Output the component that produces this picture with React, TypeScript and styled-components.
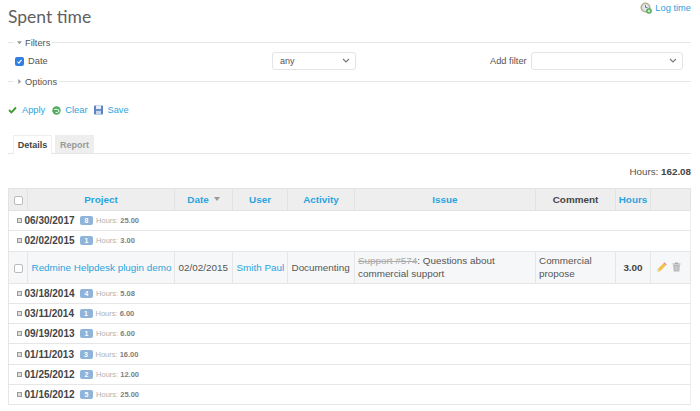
import React from "react";
import styled, { createGlobalStyle } from "styled-components";

const Global = createGlobalStyle`
  html, body { margin: 0; padding: 0; background: #fff; overflow: hidden; }
  body { font-family: "Liberation Sans", Arial, sans-serif; font-size: 9.3px; color: #555; }
  a { color: #2aa4de; text-decoration: none; }
`;

const Page = styled.div`
  position: relative;
  width: 683px;
  height: 411px;
  padding: 0 9px 0 8px;
  overflow: hidden;
`;
const TitleRow = styled.div`
  display: flex;
  justify-content: space-between;
  align-items: flex-start;
  height: 37px;
`;
const Title = styled.h2`
  margin: 6px 0 0;
  font-family: Lato, "Liberation Sans", sans-serif;
  font-weight: 400;
  font-size: 17.5px;
  line-height: 22px;
  color: #5f5f5f;
`;
const IconLink = styled.a`
  display: inline-flex;
  align-items: center;
  gap: 3px;
`;
const LogLink = styled(IconLink)`
  margin-top: 2px;
`;
const Group = styled.div`
  display: flex;
  align-items: center;
  height: 11px;
`;
const GroupLine = styled.span`
  flex: 1;
  height: 1px;
  background: #e6e6e6;
`;
const GroupStub = styled.span`
  width: 6px;
  height: 1px;
  background: #e6e6e6;
`;
const GroupLabel = styled.span`
  display: inline-flex;
  align-items: center;
  gap: 3px;
  padding: 0 2px 0 3px;
`;
const FilterRow = styled.div`
  display: flex;
  align-items: center;
  padding: 4px 0 6px 7px;
`;
const Check = styled.input.attrs({ type: "checkbox" })<{ $m?: string }>`
  appearance: none;
  box-sizing: border-box;
  width: 9px;
  height: 9px;
  margin: ${(p) => p.$m ?? "0"};
  background: #fff;
  border: 1px solid #bbb;
  border-radius: 2px;
  display: block;
`;
const BlueCheck = styled.span`
  display: inline-flex;
  align-items: center;
  justify-content: center;
  width: 9px;
  height: 9px;
  border-radius: 2px;
  background: #2f7fe0;
`;
const DateLabel = styled.span`
  margin-left: 4px;
  width: 244px;
`;
const SelectBox = styled.div<{ $w: number }>`
  position: relative;
  box-sizing: border-box;
  width: ${(p) => p.$w}px;
  height: 18px;
  border: 1px solid #e4e4e4;
  border-radius: 3px;
  background: #fff;
  line-height: 16px;
  padding-left: 7px;
  font-size: 9px;
`;
const Chevron = styled.svg`
  position: absolute;
  right: 5px;
  top: 5px;
`;
const AddFilter = styled.span`
  width: 36.5px;
  margin-left: 134px;
  margin-right: 4.5px;
  white-space: nowrap;
`;
const Actions = styled.div`
  display: flex;
  align-items: center;
  height: 14px;
  margin-top: 16px;
`;
const ApplyLink = styled(IconLink)<{ $gap: number; $after: number }>`
  gap: ${(p) => p.$gap}px;
  margin-right: ${(p) => p.$after}px;
`;
const Tabs = styled.div`
  display: flex;
  align-items: flex-end;
  gap: 3px;
  height: 18px;
  margin-top: 18px;
  padding-left: 5px;
  border-bottom: 1px solid #e6e6e6;
`;
const Tab = styled.div<{ $active?: boolean }>`
  box-sizing: border-box;
  width: 39px;
  height: ${(p) => (p.$active ? 19 : 18)}px;
  line-height: 18px;
  text-align: center;
  margin-bottom: ${(p) => (p.$active ? "-1px" : "0")};
  background: ${(p) => (p.$active ? "#fff" : "#eee")};
  border: 1px solid #eee;
  border-bottom: 0;
  font-weight: 700;
  font-size: 9px;
  color: ${(p) => (p.$active ? "#444" : "#999")};
`;
const Total = styled.div`
  text-align: right;
  height: 34px;
  line-height: 36px;
  font-size: 9.8px;
  b { color: #444; }
`;
const Table = styled.table`
  width: 682px;
  table-layout: fixed;
  border-collapse: collapse;
  font-size: 9.9px;
`;
const Th = styled.th<{ $plain?: boolean }>`
  height: 21px;
  padding: 0;
  background: #eee;
  border: 1px solid #e2e2e2;
  font-weight: 700;
  text-align: center;
  color: ${(p) => (p.$plain ? "#444" : "#2aa4de")};
`;
const SortArrow = styled.span`
  display: inline-block;
  width: 0;
  height: 0;
  margin-left: 5px;
  vertical-align: 2px;
  border-left: 3.5px solid transparent;
  border-right: 3.5px solid transparent;
  border-top: 4px solid #999;
`;
const GroupCell = styled.td`
  height: 19.3px;
  padding: 0 0 0 8px;
  border: 1px solid #e6e6e6;
  border-right-color: #eee;
  white-space: nowrap;
  background: #fff;
`;
const GroupInner = styled.div`
  display: flex;
  align-items: center;
`;
const Toggle = styled.span`
  box-sizing: border-box;
  width: 5px;
  height: 5px;
  margin-right: 2.5px;
  border: 1px solid #999;
  background: #ddd;
`;
const GroupDate = styled.strong`
  font-size: 10px;
  color: #444;
`;
const Count = styled.span`
  box-sizing: border-box;
  width: 13px;
  height: 9px;
  margin: 0 3px 0 5.5px;
  background: #8fb3d9;
  border-radius: 2px;
  color: #fff;
  font-size: 7px;
  font-weight: 700;
  line-height: 9px;
  text-align: center;
`;
const HoursLabel = styled.span`
  font-size: 7.5px;
  color: #b0b0b0;
  b { color: #808080; }
`;
const Td = styled.td`
  height: 31px;
  padding: 0 3px;
  background: #f6f7f8;
  border: 1px solid #e6e6e6;
  line-height: 13px;
  text-align: left;
`;
const NoWrapTd = styled(Td)`
  padding-left: 3.5px;
  white-space: nowrap;
`;
const HoursTd = styled(Td)`
  font-weight: 700;
  color: #444;
  text-align: center;
`;
const Struck = styled.span`
  color: #aaa;
  text-decoration: line-through;
`;
const RowActions = styled.div`
  display: flex;
  align-items: center;
  gap: 5px;
  padding-left: 2px;
`;

const ArrowIcon = ({ open }: { open: boolean }) => (
  <svg width="5" height="5" viewBox="0 0 6 6">
    <path d={open ? "M0 1.5h6L3 5z" : "M1.5 0v6L5 3z"} fill="#999" />
  </svg>
);
const SelectChevron = () => (
  <Chevron width="8" height="6" viewBox="0 0 8 6">
    <path d="M1 1l3 3 3-3" fill="none" stroke="#777" strokeWidth="1.1" />
  </Chevron>
);

const groups1 = [
  ["06/30/2017", "8", "25.00"],
  ["02/02/2015", "1", "3.00"],
];
const groups2 = [
  ["03/18/2014", "4", "5.08"],
  ["03/11/2014", "1", "6.00"],
  ["09/19/2013", "1", "6.00"],
  ["01/11/2013", "3", "16.00"],
  ["01/25/2012", "2", "12.00"],
  ["01/16/2012", "5", "25.00"],
];
const cols = [19, 147, 58, 55, 67, 181, 80, 35, 40];

const GroupRow = ({ g }: { g: string[] }) => (
  <tr>
    <GroupCell colSpan={9}>
      <GroupInner>
        <Toggle />
        <GroupDate>{g[0]}</GroupDate>
        <Count>{g[1]}</Count>
        <HoursLabel>
          Hours: <b>{g[2]}</b>
        </HoursLabel>
      </GroupInner>
    </GroupCell>
  </tr>
);

export default function App() {
  return (
    <Page>
      <Global />
      <TitleRow>
        <Title>Spent time</Title>
        <LogLink href="#">
          <svg width="12" height="12" viewBox="0 0 12 12">
            <circle cx="5.5" cy="5.5" r="5" fill="#b9ad8f" />
            <circle cx="5.5" cy="5.5" r="3.4" fill="#dfe7ef" />
            <path d="M5.5 3v2.5h2" stroke="#667" strokeWidth="0.8" fill="none" />
            <circle cx="9" cy="9" r="2.8" fill="#45a84a" />
            <path d="M7.5 9h3M9 7.5v3" stroke="#fff" strokeWidth="0.9" />
          </svg>
          Log time
        </LogLink>
      </TitleRow>
      <Group>
        <GroupStub />
        <GroupLabel>
          <ArrowIcon open />
          Filters
        </GroupLabel>
        <GroupLine />
      </Group>
      <FilterRow>
        <BlueCheck>
          <svg width="7" height="7" viewBox="0 0 7 7">
            <path d="M1.5 3.7l1.4 1.4 2.6-3.2" fill="none" stroke="#fff" strokeWidth="1.1" />
          </svg>
        </BlueCheck>
        <DateLabel>Date</DateLabel>
        <SelectBox $w={84}>
          any
          <SelectChevron />
        </SelectBox>
        <AddFilter>Add filter</AddFilter>
        <SelectBox $w={152}>
          <SelectChevron />
        </SelectBox>
      </FilterRow>
      <Group>
        <GroupStub />
        <GroupLabel>
          <ArrowIcon open={false} />
          Options
        </GroupLabel>
        <GroupLine />
      </Group>
      <Actions>
        <ApplyLink href="#" $gap={5} $after={7}>
          <svg width="9" height="8" viewBox="0 0 9 8">
            <path d="M1 4l2.4 2.4L8 1.5" fill="none" stroke="#3f9c35" strokeWidth="1.9" />
          </svg>
          Apply
        </ApplyLink>
        <ApplyLink href="#" $gap={4} $after={7}>
          <svg width="9" height="9" viewBox="0 0 9 9">
            <circle cx="4.5" cy="4.5" r="4.2" fill="#4fae5a" />
            <path d="M2.2 3.4h3.2a1.5 1.5 0 010 3H3.6" fill="none" stroke="#fff" strokeWidth="1" />
          </svg>
          Clear
        </ApplyLink>
        <ApplyLink href="#" $gap={4} $after={0}>
          <svg width="9" height="10" viewBox="0 0 9 10">
            <rect x="0" y="0.5" width="9" height="9" rx="0.8" fill="#5b84c4" />
            <rect x="2" y="0.5" width="5" height="3.6" fill="#e7eef8" />
            <rect x="2" y="5.8" width="5" height="3.7" fill="#c8d6ea" />
          </svg>
          Save
        </ApplyLink>
      </Actions>
      <Tabs>
        <Tab $active>Details</Tab>
        <Tab>Report</Tab>
      </Tabs>
      <Total>
        Hours: <b>162.08</b>
      </Total>
      <Table>
        <colgroup>
          {cols.map((w, i) => (
            <col key={i} width={w} />
          ))}
        </colgroup>
        <thead>
          <tr>
            <Th>
              <Check $m="2px auto 0 5px" />
            </Th>
            <Th>Project</Th>
            <Th>
              Date
              <SortArrow />
            </Th>
            <Th>User</Th>
            <Th>Activity</Th>
            <Th>Issue</Th>
            <Th $plain>Comment</Th>
            <Th>Hours</Th>
            <Th />
          </tr>
        </thead>
        <tbody>
          {groups1.map((g) => (
            <GroupRow key={g[0]} g={g} />
          ))}
          <tr>
            <Td>
              <Check $m="2px 0 0 2px" />
            </Td>
            <NoWrapTd>
              <a href="#">Redmine Helpdesk plugin demo</a>
            </NoWrapTd>
            <NoWrapTd>02/02/2015</NoWrapTd>
            <NoWrapTd>
              <a href="#">Smith Paul</a>
            </NoWrapTd>
            <NoWrapTd>Documenting</NoWrapTd>
            <Td>
              <Struck>Support #574</Struck>: Questions about commercial support
            </Td>
            <Td>Commercial propose</Td>
            <HoursTd>3.00</HoursTd>
            <Td>
              <RowActions>
                <svg width="11" height="11" viewBox="0 0 11 11">
                  <path d="M1 10l.8-3L7.5 1.3l2.2 2.2L4 9.2z" fill="#f0c24b" />
                  <path d="M7.5 1.3l1-1 2.2 2.2-1 1z" fill="#ee8a8a" />
                  <path d="M1 10l.8-3 2.2 2.2z" fill="#f3dfb4" />
                </svg>
                <svg width="9" height="10" viewBox="0 0 9 10">
                  <path d="M0.5 1.5h8v1h-8zM3 0.5h3v1H3z" fill="#aaa" />
                  <path d="M1.2 3h6.6l-.5 6.5H1.7z" fill="#b5b5b5" />
                  <path d="M3 4v4.5M4.5 4v4.5M6 4v4.5" stroke="#e4e4e4" strokeWidth="0.5" />
                </svg>
              </RowActions>
            </Td>
          </tr>
          {groups2.map((g) => (
            <GroupRow key={g[0]} g={g} />
          ))}
        </tbody>
      </Table>
    </Page>
  );
}
